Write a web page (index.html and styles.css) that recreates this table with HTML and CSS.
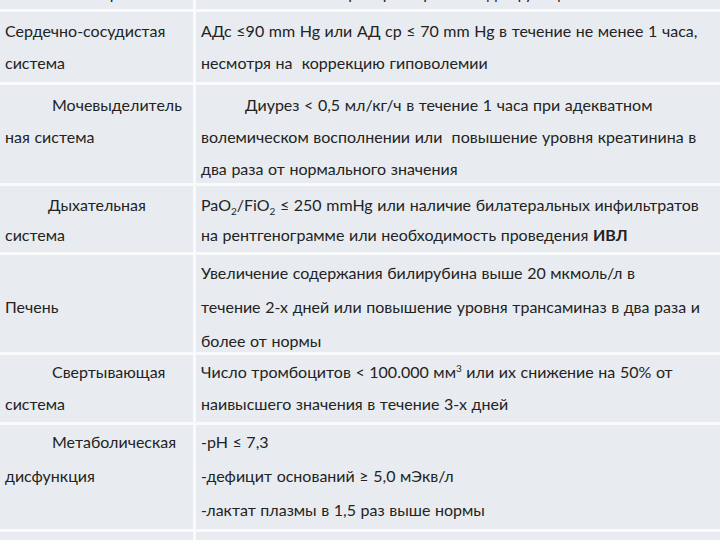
FILE: index.html
```html
<!DOCTYPE html>
<html lang="ru">
<head>
<meta charset="utf-8">
<title>Критерии органной дисфункции</title>
<link rel="stylesheet" href="styles.css">
</head>
<body>
<div class="table">
  <div class="cell r0 head"><div class="line center">Система органов</div></div>
  <div class="cell r0 head"><div class="line center">Критерии органной дисфункции</div></div>

  <div class="cell r1">
    <div class="line">Сердечно-сосудистая</div>
    <div class="line">система</div>
  </div>
  <div class="cell r1">
    <div class="line">АДс ≤90 mm Hg или АД ср ≤ 70 mm Hg в течение не менее 1 часа,</div>
    <div class="line">несмотря на&nbsp; коррекцию гиповолемии</div>
  </div>

  <div class="cell r2">
    <div class="line indent">Мочевыделитель</div>
    <div class="line">ная система</div>
  </div>
  <div class="cell r2">
    <div class="line indent-r">Диурез &lt; 0,5 мл/кг/ч в течение 1 часа при адекватном</div>
    <div class="line">волемическом восполнении или&nbsp; повышение уровня креатинина в</div>
    <div class="line">два раза от нормального значения</div>
  </div>

  <div class="cell r3">
    <div class="line indent-s">Дыхательная</div>
    <div class="line">система</div>
  </div>
  <div class="cell r3">
    <div class="line">PaO<sub>2</sub>/FiO<sub>2</sub> ≤ 250 mmHg или наличие билатеральных инфильтратов</div>
    <div class="line">на рентгенограмме или необходимость проведения <b>ИВЛ</b></div>
  </div>

  <div class="cell r4">
    <div class="line">&nbsp;</div>
    <div class="line">Печень</div>
  </div>
  <div class="cell r4">
    <div class="line">Увеличение содержания билирубина выше 20 мкмоль/л в</div>
    <div class="line">течение 2-х дней или повышение уровня трансаминаз в два раза и</div>
    <div class="line">более от нормы</div>
  </div>

  <div class="cell r5">
    <div class="line indent">Свертывающая</div>
    <div class="line">система</div>
  </div>
  <div class="cell r5">
    <div class="line">Число тромбоцитов &lt; 100.000 мм<sup>3</sup> или их снижение на 50% от</div>
    <div class="line">наивысшего значения в течение 3-х дней</div>
  </div>

  <div class="cell r6">
    <div class="line indent">Метаболическая</div>
    <div class="line">дисфункция</div>
  </div>
  <div class="cell r6">
    <div class="line">-pH ≤ 7,3</div>
    <div class="line">-дефицит оснований ≥ 5,0 мЭкв/л</div>
    <div class="line">-лактат плазмы в 1,5 раз выше нормы</div>
  </div>

  <div class="cell r7"></div>
  <div class="cell r7"></div>
</div>
</body>
</html>
```

FILE: styles.css
```css
html, body {
  margin: 0;
  padding: 0;
  background: #ffffff;
}

body {
  width: 720px;
  height: 540px;
  overflow: hidden;
  font-family: Lato, "Open Sans", "DejaVu Sans", sans-serif;
  font-size: 16px;
  color: #232323;
}

.table {
  display: grid;
  grid-template-columns: 193px 1fr;
  grid-template-rows: 9px 70px 98px 66px 97px 67px 104px 1fr;
  gap: 3px;
  height: 540px;
  background: #f8fafc;
}

.cell {
  background: #e8ecf0;
  padding: 0 5px;
  overflow: hidden;
  box-sizing: border-box;
}

.line {
  white-space: nowrap;
}

.center {
  text-align: center;
}

.head .line {
  line-height: 20px;
  margin-top: -17px;
}

.indent {
  padding-left: 47px;
}

.indent-s {
  padding-left: 43px;
}

.indent-r {
  padding-left: 44px;
}

.r1 { padding-top: 3px; line-height: 32px; }
.r2 { padding-top: 4px; line-height: 32px; }
.r3 { padding-top: 4px; line-height: 30px; }
.r4 { padding-top: 1px; line-height: 34px; }
.r5 { padding-top: 1px; line-height: 32px; }
.r6 { padding-top: 0; line-height: 34px; }

.r1 .line, .r2 .line, .r3 .line, .r4 .line, .r5 .line, .r6 .line {
  word-spacing: 0.5px;
}

sub, sup {
  font-size: 10px;
  line-height: 0;
}

b {
  font-weight: 700;
}
```
